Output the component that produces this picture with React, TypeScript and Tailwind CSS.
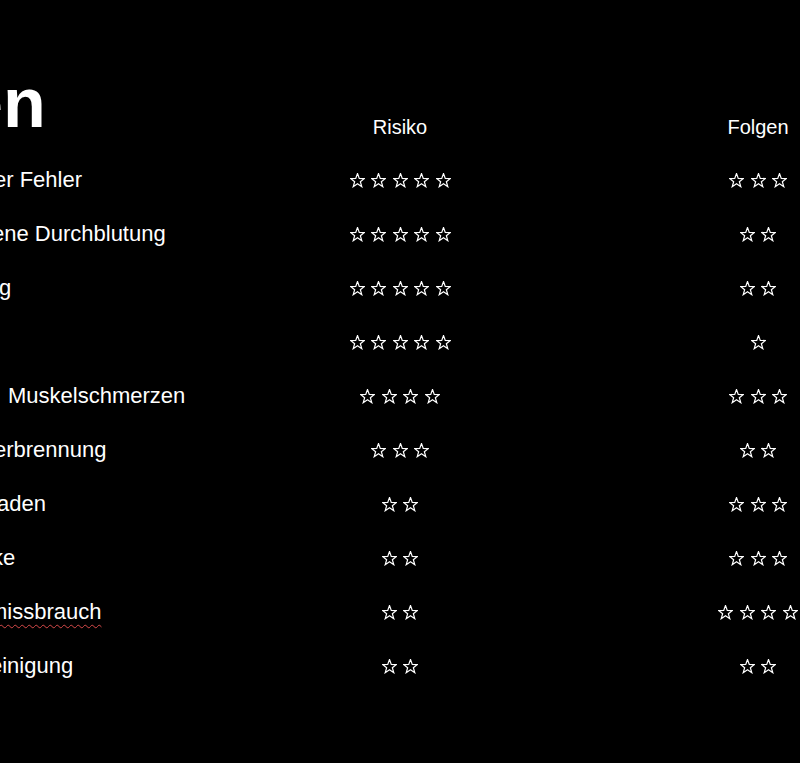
import React from 'react'

type Row = {
  label: string
  offset: string
  risk: number
  impact: number
  squiggle?: boolean
}

// Left edges are cut off in the slide, so each visible fragment gets its own offset
const rows: Row[] = [
  { label: 'er Fehler', offset: 'ml-[-6px]', risk: 5, impact: 3 },
  { label: 'ene Durchblutung', offset: 'ml-[-8px]', risk: 5, impact: 2 },
  { label: 'g', offset: 'ml-[-1px]', risk: 5, impact: 2 },
  { label: '', offset: 'ml-0', risk: 5, impact: 1 },
  { label: 'Muskelschmerzen', offset: 'ml-[8px]', risk: 4, impact: 3 },
  { label: 'erbrennung', offset: 'ml-[-6px]', risk: 3, impact: 2 },
  { label: 'aden', offset: 'ml-[-3px]', risk: 2, impact: 3 },
  { label: 'ke', offset: 'ml-[-8px]', risk: 2, impact: 3 },
  { label: 'missbrauch', offset: 'ml-[-11px]', risk: 2, impact: 4, squiggle: true },
  { label: 'einigung', offset: 'ml-[-10px]', risk: 2, impact: 2 },
]

const STAR_POINTS =
  '7.5,0.5 9.26,5.37 14.44,5.54 10.35,8.73 11.79,13.71 7.5,10.8 3.21,13.71 4.65,8.73 0.56,5.54 5.74,5.37'

function Star() {
  return (
    <svg width="15" height="15" viewBox="0 0 15 15" className="block">
      <polygon points={STAR_POINTS} fill="none" stroke="white" strokeWidth="1.2" strokeLinejoin="miter" />
    </svg>
  )
}

function Stars({ count }: { count: number }) {
  return (
    <div className="flex justify-center gap-[6.5px]">
      {Array.from({ length: count }).map((_, i) => (
        <Star key={i} />
      ))}
    </div>
  )
}

export default function App() {
  return (
    <div
      className="h-[763px] w-full overflow-hidden bg-black text-white"
      style={{ fontFamily: '"Liberation Sans", Arial, sans-serif' }}
    >
      <div className="w-[858px]">
        {/* header */}
        <div className="flex h-[153px]">
          <div className="w-[300px] pt-[68px]">
            <div className="ml-[-36px] text-[70px] font-bold leading-none">en</div>
          </div>
          <div className="w-[200px] pt-[115px] text-center text-[20px] leading-6">Risiko</div>
          <div className="w-[158px]" />
          <div className="w-[200px] pt-[115px] text-center text-[20px] leading-6">Folgen</div>
        </div>

        {/* rows */}
        {rows.map((row, i) => (
          <div key={i} className="flex h-[54px] items-center">
            <div className="w-[300px] whitespace-nowrap text-[22px] leading-[54px]">
              <span
                className={`${row.offset} inline-block ${
                  row.squiggle ? 'underline decoration-[#d84a4a] decoration-wavy decoration-1 underline-offset-[5px]' : ''
                }`}
              >
                {row.label}
              </span>
            </div>
            <div className="w-[200px]">
              <Stars count={row.risk} />
            </div>
            <div className="w-[158px]" />
            <div className="w-[200px]">
              <Stars count={row.impact} />
            </div>
          </div>
        ))}
      </div>
    </div>
  )
}
